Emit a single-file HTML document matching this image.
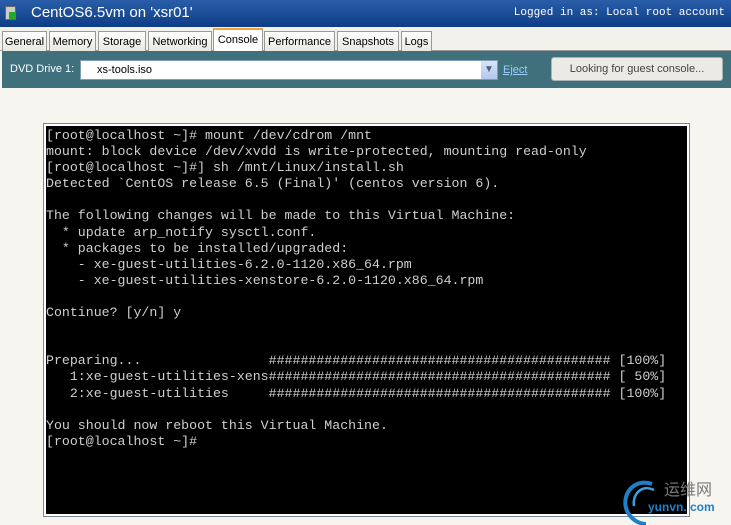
<!DOCTYPE html>
<html><head><meta charset="utf-8"><style>
*{margin:0;padding:0;box-sizing:border-box}
body{width:731px;height:525px;overflow:hidden;background:#f6f5f0;font-family:"Liberation Sans",sans-serif;position:relative}
#title{position:absolute;left:0;top:0;width:731px;height:27px;background:linear-gradient(#2a5ea8,#0e3d87);color:#fff}
#title .t{position:absolute;left:31px;top:4px;font-size:15px;letter-spacing:0}
#title .r{position:absolute;right:6px;top:7px;font-family:"Liberation Mono",monospace;font-size:11px}
#icon{position:absolute;left:5px;top:6px;width:11px;height:14px;background:#ccc;border:1px solid #666}
#icon:after{content:"";position:absolute;left:3px;top:5px;width:7px;height:7px;background:#2a2}
#tabs{position:absolute;top:27px;left:0;width:731px;height:24px;background:#f2f1ec;border-bottom:1px solid #999}
.tab{position:absolute;top:4px;height:20px;border:1px solid #999;border-bottom:none;background:linear-gradient(#fff,#e8e7e0);font-size:11px;padding:4px 0 0;text-align:center;color:#000}
.tab.a{top:1px;height:23px;background:#fff;border-top:2px solid #f2a33a}
#tb{position:absolute;top:51px;left:2px;width:729px;height:37px;background:#3f707c}
#tb .l{position:absolute;left:8px;top:12px;color:#fff;font-size:11px}
#combo{position:absolute;left:78px;top:9px;width:418px;height:20px;background:#fff;border:1px solid #7f9db9;font-size:11px;padding:3px 0 0 16px}
#combo .b{position:absolute;right:0;top:0;width:16px;height:18px;background:linear-gradient(#d8e4f8,#b3c8ee);color:#4d6185;font-size:10px;text-align:center;line-height:18px}
#ej{position:absolute;left:501px;top:13px;color:#9cf;font-size:11px;text-decoration:underline}
#lk{position:absolute;left:549px;top:6px;width:172px;height:24px;background:#eceae4;border:1px solid #a8b3b6;border-radius:3px;font-size:11px;color:#444;text-align:center;line-height:22px}
#con{position:absolute;left:44px;top:124px;width:645px;height:392px;border:2px solid #fff;outline:1px solid #7a8896;background:#000}
pre{position:absolute;left:0;top:2px;font-family:"Liberation Mono","DejaVu Sans Mono",monospace;font-size:13.25px;line-height:16.1px;color:#cfcfcf}
#logo{position:absolute;left:626px;top:478px}
#logo .cn{position:absolute;left:38px;top:0;font-size:16px;color:#7a7a7a;font-family:"Noto Sans CJK SC",sans-serif;white-space:nowrap;line-height:20px}
#logo .en{position:absolute;left:22px;top:22px;font-size:12px;font-weight:bold;color:#1e80c8;white-space:nowrap;font-family:"Liberation Sans",sans-serif}
</style></head><body>
<div id="title"><div id="icon"></div><div class="t">CentOS6.5vm on 'xsr01'</div><div class="r">Logged in as: Local root account</div></div>
<div id="tabs">
<div class="tab" style="left:2px;width:45px">General</div>
<div class="tab" style="left:49px;width:47px">Memory</div>
<div class="tab" style="left:98px;width:48px">Storage</div>
<div class="tab" style="left:148px;width:64px">Networking</div>
<div class="tab a" style="left:213px;width:50px">Console</div>
<div class="tab" style="left:264px;width:71px">Performance</div>
<div class="tab" style="left:337px;width:62px">Snapshots</div>
<div class="tab" style="left:401px;width:31px">Logs</div>
</div>
<div id="tb"><div class="l">DVD Drive 1:</div><div id="combo">xs-tools.iso<div class="b">▼</div></div><div id="ej">Eject</div><div id="lk">Looking for guest console...</div></div>
<div id="con"><pre>[root@localhost ~]# mount /dev/cdrom /mnt
mount: block device /dev/xvdd is write-protected, mounting read-only
[root@localhost ~]#] sh /mnt/Linux/install.sh
Detected `CentOS release 6.5 (Final)' (centos version 6).

The following changes will be made to this Virtual Machine:
  * update arp_notify sysctl.conf.
  * packages to be installed/upgraded:
    - xe-guest-utilities-6.2.0-1120.x86_64.rpm
    - xe-guest-utilities-xenstore-6.2.0-1120.x86_64.rpm

Continue? [y/n] y


Preparing...                ########################################### [100%]
   1:xe-guest-utilities-xens########################################### [ 50%]
   2:xe-guest-utilities     ########################################### [100%]

You should now reboot this Virtual Machine.
[root@localhost ~]#</pre></div>
<div id="logo"><svg width="40" height="47" viewBox="0 0 40 47" style="position:absolute;left:-4px;top:0"><path d="M30 6 C14 0 0 14 4 30 C7 40 16 46 24 46" fill="none" stroke="#1e80c8" stroke-width="4"/><path d="M32 12 C20 6 10 16 12 28" fill="none" stroke="#3aa0e0" stroke-width="2.5"/></svg><div class="cn">运维网</div><div class="en">yunvn. com</div></div>
</body></html>
